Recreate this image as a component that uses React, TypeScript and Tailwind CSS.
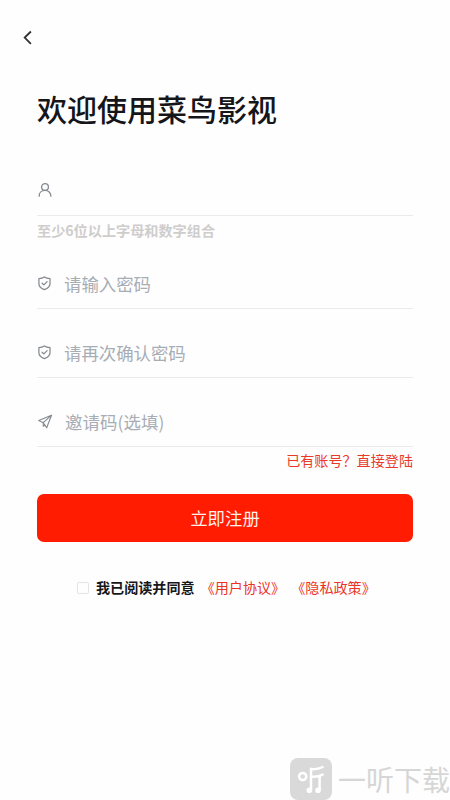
import React, { useState } from "react"

interface FieldProps {
  icon: React.ReactNode
  placeholder?: string
  type?: string
  className?: string
  inputClassName?: string
}

const UserIcon = () => (
  <svg
    className="w-4 h-4"
    viewBox="0 0 16 16"
    fill="none"
    stroke="#85898f"
    strokeWidth="1.3"
    strokeLinecap="round"
  >
    <circle cx="8" cy="5" r="3.4" />
    <path d="M2.2 14.2V13.6C2.2 10.7 4.6 8.4 8 8.4s5.8 2.3 5.8 5.2v.6" />
  </svg>
)

const ShieldIcon = () => (
  <svg
    className="w-4 h-4"
    viewBox="0 0 16 16"
    fill="none"
    stroke="#85898f"
    strokeWidth="1.25"
    strokeLinecap="round"
    strokeLinejoin="round"
  >
    <path d="M7.4 2C5.8 3.1 4 3.5 1.9 3.6v5.1c0 2.8 2.3 4.7 5.5 5.9 3.2-1.2 5.6-3.1 5.6-5.9V3.6c-2.1-.1-4-.5-5.6-1.6z" />
    <path d="M5.1 8.2l1.8 1.7 3.2-3.3" />
  </svg>
)

const SendIcon = () => (
  <svg
    className="w-4 h-4"
    viewBox="0 0 16 16"
    fill="none"
    stroke="#85898f"
    strokeWidth="1.1"
    strokeLinejoin="round"
  >
    <path d="M14.5 2.2L1.7 7.6l4.6 2.1 3.4 5.1z" />
    <path d="M14.5 2.2L6.3 9.7v3.5l1.9-1.4" />
  </svg>
)

const WatermarkLogo = () => (
  <svg className="w-[42px] h-[42px]" viewBox="0 0 42 42" fill="none">
    <rect width="42" height="42" rx="8" fill="#d9d9d9" />
    <g stroke="#fff" strokeWidth="2.5" strokeLinecap="round">
      <circle cx="12.7" cy="18.5" r="3.6" />
      <path d="M21 32V11c4.4.5 8-.1 11.6-2" />
      <path d="M21 18.6c4.4.5 8-.1 11.6-2" />
      <path d="M29.6 18.5V32" />
    </g>
    <circle cx="19.3" cy="32.2" r="2.8" fill="#fff" />
    <circle cx="28" cy="32.2" r="2.8" fill="#fff" />
  </svg>
)

const Field: React.FC<FieldProps> = ({
  icon,
  placeholder,
  type = "text",
  className = "h-[69px]",
  inputClassName = ""
}) => (
  <label
    className={`flex items-end border-b border-[#ebebeb] ${className}`}
  >
    <span className="w-[27px] pb-[17px] shrink-0">{icon}</span>
    <input
      type={type}
      placeholder={placeholder}
      className={`flex-1 min-w-0 h-[26px] mb-[11px] bg-transparent text-[17.4px] leading-[26px] outline-none placeholder:text-[#a7adb5] ${inputClassName}`}
    />
  </label>
)

const App: React.FC = () => {
  const [agreed, setAgreed] = useState(false)

  return (
    <div className="relative h-[800px] w-[450px] overflow-hidden bg-[#fefefe] font-['Noto_Sans_CJK_SC',sans-serif]">
      <header className="h-[76px] pt-[29px] pl-[20px]">
        <button type="button" className="block">
          <svg
            className="w-[16px] h-[17px]"
            viewBox="0 0 16 17"
            fill="none"
            stroke="#303034"
            strokeWidth="1.8"
          >
            <path d="M10.9 2.5L4.7 8.6l6.2 6.2" />
          </svg>
        </button>
      </header>

      <main className="w-[376px] ml-[37px]">
        <h1 className="h-[64px] text-[30px] leading-[64px] font-medium text-[#15151a] whitespace-nowrap">
          欢迎使用菜鸟影视
        </h1>

        <form onSubmit={e => e.preventDefault()}>
          <Field icon={<UserIcon />} className="h-[76px]" />
          <p className="h-[24px] text-[14.15px] leading-[29px] font-bold text-[#cfcdcc] whitespace-nowrap">
            至少6位以上字母和数字组合
          </p>
          <Field icon={<ShieldIcon />} placeholder="请输入密码" type="password" />
          <Field icon={<ShieldIcon />} placeholder="请再次确认密码" type="password" />
          <Field
            icon={<SendIcon />}
            placeholder="邀请码(选填)"
            inputClassName="pl-[1px] tracking-[0.1px]"
          />

          <div className="h-[47px] text-right text-[14.1px] leading-[27px] text-[#e83a2a]">
            已有账号？直接登陆
          </div>

          <button
            type="submit"
            className="block w-full h-[48px] rounded-[7px] bg-[#ff1c00] text-[17.4px] leading-[48px] text-[#fff0ee]"
          >
            立即注册
          </button>
        </form>

        <div className="flex items-center mt-[35px] pl-[40px] h-[22px] text-[14.1px] leading-[22px] whitespace-nowrap">
          <input
            type="checkbox"
            checked={agreed}
            onChange={e => setAgreed(e.target.checked)}
            className="appearance-none w-[12px] h-[12px] mr-[7px] rounded-[2px] border border-[#e4e4e4] checked:bg-[#ff1c00]"
          />
          <span className="-mt-[2px] font-bold text-[#17171a]">我已阅读并同意</span>
          <a className="-mt-[2px] ml-[6px] text-[#ea3526]">《用户协议》</a>
          <a className="-mt-[2px] ml-[6px] text-[#ea3526]">《隐私政策》</a>
        </div>
      </main>

      <div className="absolute left-[290px] top-[758px] flex items-center">
        <WatermarkLogo />
        <span className="ml-[6px] text-[28px] leading-[42px] text-[#d6d6d6] whitespace-nowrap">
          一听下载
        </span>
      </div>
    </div>
  )
}

export default App
